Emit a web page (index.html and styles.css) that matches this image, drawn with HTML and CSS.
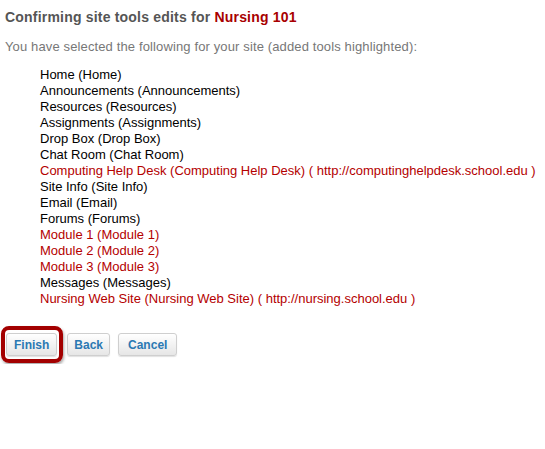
FILE: index.html
```html
<!DOCTYPE html>
<html>
<head>
<meta charset="utf-8">
<link rel="stylesheet" href="styles.css">
</head>
<body>
<h1 class="title">Confirming site tools edits for <span class="site">Nursing 101</span></h1>
<p class="intro">You have selected the following for your site (added tools highlighted):</p>
<ul class="tools">
<li>Home (Home)</li>
<li>Announcements (Announcements)</li>
<li>Resources (Resources)</li>
<li>Assignments (Assignments)</li>
<li>Drop Box (Drop Box)</li>
<li>Chat Room (Chat Room)</li>
<li class="added">Computing Help Desk (Computing Help Desk) ( http://computinghelpdesk.school.edu )</li>
<li>Site Info (Site Info)</li>
<li>Email (Email)</li>
<li>Forums (Forums)</li>
<li class="added">Module 1 (Module 1)</li>
<li class="added">Module 2 (Module 2)</li>
<li class="added">Module 3 (Module 3)</li>
<li>Messages (Messages)</li>
<li class="added">Nursing Web Site (Nursing Web Site) ( http://nursing.school.edu )</li>
</ul>
<div class="actions">
<span class="highlight-wrap"><button class="btn">Finish</button><span class="ring"></span></span>
<button class="btn btn-narrow">Back</button>
<button class="btn btn-wide">Cancel</button>
</div>
</body>
</html>
```
FILE: styles.css
```css
html, body { background: #fff; }
body {
  margin: 0;
  padding: 8px 5px;
  font-family: "Liberation Sans", Arial, sans-serif;
}
.title {
  margin: 0;
  font-size: 14px;
  line-height: 18px;
  font-weight: bold;
  color: #555;
  letter-spacing: 0.2px;
}
.site { color: #a80000; }
.intro {
  margin: 13px 0 0;
  font-size: 13px;
  line-height: 16px;
  color: #777;
  letter-spacing: 0.13px;
}
.tools {
  list-style: none;
  margin: 12px 0 0;
  padding: 0 0 0 35px;
  font-size: 13px;
  line-height: 16px;
  color: #000;
}
.tools .added { color: #b40000; }
.actions {
  margin-top: 26px;
  padding-left: 1px;
  display: flex;
  gap: 8px;
  align-items: center;
}
.highlight-wrap {
  position: relative;
  display: inline-flex;
  margin-right: 2px;
}
.btn {
  font-family: "Liberation Sans", Arial, sans-serif;
  font-size: 12px;
  font-weight: bold;
  color: #2b79b3;
  height: 23px;
  padding: 0 7px;
  border: 1px solid #cfcfcf;
  border-radius: 3px;
  background: linear-gradient(#ffffff, #e6e6e6);
  box-shadow: 0 1px 1px rgba(0,0,0,0.12);
}
.btn-narrow { padding: 0 6px; }
.btn-wide { padding: 0 9px; }
.ring {
  position: absolute;
  left: -5px;
  top: -7px;
  right: -6px;
  bottom: -7px;
  border: 4px solid #a30000;
  border-radius: 8px;
  box-shadow: 1px 2px 3px rgba(0,0,0,0.35);
  pointer-events: none;
}
```
